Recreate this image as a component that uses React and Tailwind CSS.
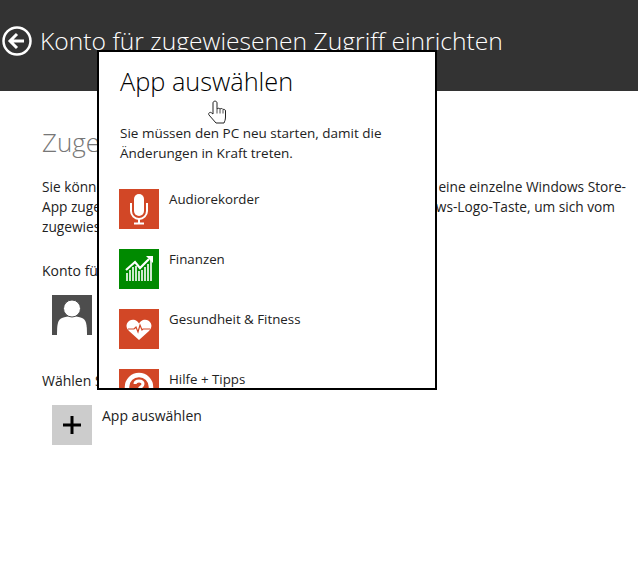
const apps = [
  { name: 'Audiorekorder', color: 'bg-[#d24726]', icon: MicIcon },
  { name: 'Finanzen', color: 'bg-[#008a00]', icon: FinanceIcon },
  { name: 'Gesundheit & Fitness', color: 'bg-[#d24726]', icon: HeartIcon },
  { name: 'Hilfe + Tipps', color: 'bg-[#d24726]', icon: HelpIcon },
];

function MicIcon() {
  return (
    <svg width="40" height="40" viewBox="0 0 40 40" fill="none" stroke="#fff">
      <rect x="15" y="5" width="10" height="22" rx="5" fill="#fff" stroke="none" />
      <path d="M12 14v8a8 8 0 0 0 16 0v-8" strokeWidth="2" />
      <path d="M20 30v4M15 34.500h10" strokeWidth="2" />
    </svg>
  );
}

function FinanceIcon() {
  return (
    <svg width="40" height="40" viewBox="0 0 40 40" fill="none">
      <path d="M8 32V24M11 32V21M14 32V18M17 32V17M20 32V22M23 32V21M26 32V18M29 32V15M32 32V11" stroke="#fff" strokeWidth="1.600" />
      <path d="M7 21l9-8 5 6 9-9" stroke="#fff" strokeWidth="2.200" />
      <path d="M27 7h7v7z" fill="#fff" />
    </svg>
  );
}

function HeartIcon() {
  return (
    <svg width="40" height="40" viewBox="0 0 40 40" fill="none">
      <path d="M20 31L10 22c-6-6 0-13 6-11 2 .7 3 2 4 3.500 1-1.500 2-2.800 4-3.500 6-2 12 5 6 11z" fill="#fff" />
      <path d="M9 20h6l2-2 2 5 2-7 2 5 1-1h7" stroke="#d24726" strokeWidth="1.200" />
    </svg>
  );
}

function HelpIcon() {
  return (
    <svg width="40" height="40" viewBox="0 0 40 40" fill="none" stroke="#fff">
      <circle cx="20" cy="18" r="12" strokeWidth="4.500" />
      <path d="M16 15c0-4 8-4 8 0 0 3-4 3-4 6" strokeWidth="3" />
    </svg>
  );
}

// hand pointer lying over the dialog heading
function Cursor() {
  return (
    <svg className="absolute left-[109px] top-[37px]" width="18" height="24" viewBox="0 0 18 24" fill="#fff" stroke="#222" strokeWidth="1">
      <path d="M5 3c0-2.500 4-2.500 4 0v6c1-1 2.500-1 3 0 1-.8 2.500-.6 3 .5 1-.4 2.500 0 2.500 1.500v6c0 3-1 4.500-1.500 6H8l-7-8c-1.200-1.500.8-3.500 2.500-2.200L5 14z" />
      <path d="M9 9v4.500M12 9v4.500M15 10v3.500" fill="none" strokeWidth="0.800" />
    </svg>
  );
}

function Dialog() {
  return (
    <div className="absolute left-[97px] top-[50px] h-[340px] w-[340px] overflow-hidden border-2 border-black bg-white">
      <div className="relative pl-[20px]">
        <h2 className="ml-px mt-[11px] text-[25.300px] leading-[36px] font-light text-black">App auswählen</h2>
        <Cursor />
        <p className="ml-px mt-[24px] text-[13.500px] leading-[20px] text-[#222]">
          Sie müssen den PC neu starten, damit die
          <br />
          Änderungen in Kraft treten.
        </p>
        <ul className="mt-[26px] flex flex-col gap-[20px]">
          {apps.map((app) => (
            <li key={app.name} className="flex gap-[10px]">
              <div className={`flex h-[40px] w-[40px] shrink-0 items-center justify-center ${app.color}`}>
                <app.icon />
              </div>
              <span className="text-[13.300px] leading-[20px] text-[#222]">{app.name}</span>
            </li>
          ))}
        </ul>
      </div>
    </div>
  );
}

export default function App() {
  return (
    <div className="relative min-h-[566px] overflow-hidden bg-white font-['Open_Sans',sans-serif] text-[#222]">
      <header className="flex h-[91px] items-start bg-[#333] pl-[2px] pt-[26px] text-white">
        <svg width="30" height="30" viewBox="0 0 30 30" fill="none" stroke="#fff">
          <circle cx="15" cy="15" r="13.500" strokeWidth="2.500" />
          <path d="M15 8l-7 7 7 7M8 15h14" strokeWidth="3" />
        </svg>
        <h1 className="ml-[8px] text-[24.650px] leading-[30px] font-light">Konto für zugewiesenen Zugriff einrichten</h1>
      </header>

      <main className="pl-[42px]">
        <h2 className="mt-[33px] text-[26px] leading-[36px] font-light text-[#777]">Zugewiesener Zugriff</h2>
        <div className="mt-[17px] w-[584px] text-[13.700px] leading-[20px]">
          <div className="flex justify-between"><span>Sie können</span><span>eine einzelne Windows Store-</span></div>
          <div className="flex justify-between pr-[11px]"><span>App zugewiesen</span><span>ws-Logo-Taste, um sich vom</span></div>
          <div>zugewiesenen Konto abzumelden.</div>
        </div>
        <p className="mt-[24px] text-[14px] leading-[20px]">Konto für zugewiesenen Zugriff</p>
        <div className="mt-[14px] ml-[10px] h-[40px] w-[40px] overflow-hidden bg-[#4d4d4d]">
          <svg width="40" height="40" viewBox="0 0 40 40" fill="#fff">
            <path d="M5 40c0-12 1-15 5-17 3-1 6-2 10-2s7 1 10 2c4 2 5 5 5 17z" />
            <circle cx="20" cy="13.500" r="8.500" stroke="#4d4d4d" strokeWidth="1" />
          </svg>
        </div>
        <p className="mt-[36px] text-[14px] leading-[20px]">Wählen Sie eine App aus</p>
        <div className="mt-[14px] ml-[10px] flex gap-[10px]">
          <div className="flex h-[40px] w-[40px] items-center justify-center bg-[#ccc]">
            <svg width="20" height="20" viewBox="0 0 20 20" fill="none" stroke="#000" strokeWidth="3">
              <path d="M10 1v18M1 10h18" />
            </svg>
          </div>
          <span className="mt-px text-[14px] leading-[20px]">App auswählen</span>
        </div>
      </main>

      <Dialog />
    </div>
  );
}
